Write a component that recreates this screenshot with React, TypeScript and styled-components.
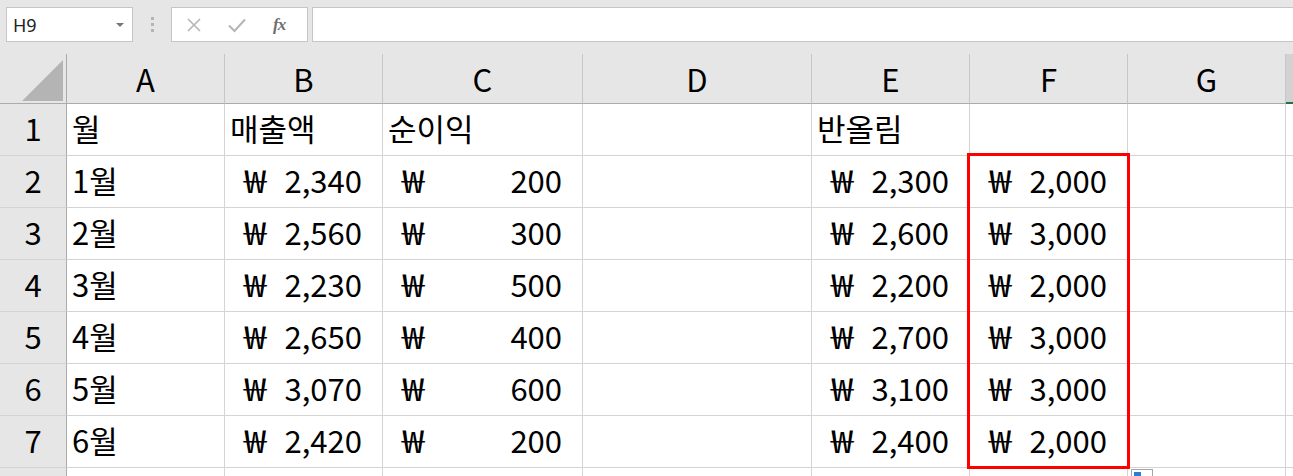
import React from "react";
import styled, { createGlobalStyle } from "styled-components";

const Global = createGlobalStyle`
  html, body { margin: 0; padding: 0; background: #ffffff; overflow: hidden; }
  #root { width: 1293px; height: 476px; overflow: hidden; }
`;

const Page = styled.div`
  width: 1293px;
  height: 476px;
  overflow: hidden;
  background: #e6e6e6;
  display: flex;
  flex-direction: column;
`;

const Toolbar = styled.div`
  height: 54px;
  flex: none;
  display: flex;
  align-items: flex-start;
  padding: 7px 0 0 6px;
  box-sizing: border-box;
`;

const NameBox = styled.div`
  width: 127px;
  height: 35px;
  box-sizing: border-box;
  background: #fff;
  border: 1px solid #c6c6c6;
  display: flex;
  align-items: center;
  justify-content: space-between;
  padding: 0 8px 0 6px;
  font-family: "Noto Sans", "DejaVu Sans", sans-serif;
  font-size: 18px;
  color: #222;
`;

const Caret = styled.span`
  width: 0;
  height: 0;
  border-left: 4px solid transparent;
  border-right: 4px solid transparent;
  border-top: 4px solid #777;
  margin-top: 1px;
`;

const Dots = styled.div`
  width: 38px;
  height: 35px;
  display: flex;
  flex-direction: column;
  align-items: center;
  justify-content: center;
  gap: 3px;
  span {
    width: 3px;
    height: 3px;
    background: #b4b4b4;
  }
`;

const FxBox = styled.div`
  width: 137px;
  height: 35px;
  box-sizing: border-box;
  background: #fff;
  border: 1px solid #c6c6c6;
  display: flex;
  align-items: center;
  padding-left: 13px;
  gap: 24px;
`;

const Fx = styled.span`
  font-family: "Liberation Serif", "DejaVu Serif", serif;
  font-style: italic;
  font-weight: bold;
  font-size: 17px;
  color: #6f6f6f;
  margin-left: 2px;
  letter-spacing: -1px;
`;

const FormulaInput = styled.div`
  flex: 1;
  height: 35px;
  margin-left: 4px;
  box-sizing: border-box;
  background: #fff;
  border: 1px solid #c6c6c6;
  border-right: none;
`;

const SheetWrap = styled.div`
  position: relative;
  flex: 1;
  overflow: hidden;
`;

const Grid = styled.div`
  display: grid;
  grid-template-columns: 67px 158px 158px 200px 229px 158px 158px 158px 1fr;
  grid-template-rows: 50px repeat(8, 52px);
  font-family: "Noto Sans CJK KR", "Noto Sans", sans-serif;
  font-size: 31px;
  color: #000;
`;

const Corner = styled.div`
  background: #e6e6e6;
  border-right: 1px solid #ababab;
  border-bottom: 1px solid #ababab;
  display: flex;
  align-items: flex-end;
  justify-content: flex-end;
  padding: 0 3px 2px 0;
  box-sizing: border-box;
`;

const ColHead = styled.div<{ $sel?: boolean }>`
  background: ${(p) => (p.$sel ? "#d2d2d2" : "#e6e6e6")};
  box-sizing: border-box;
  border-bottom: ${(p) => (p.$sel ? "2px solid #217346" : "1px solid #ababab")};
  border-right: 1px solid #c6c6c6;
  display: flex;
  align-items: center;
  justify-content: center;
`;

const RowHead = styled.div`
  background: #e6e6e6;
  box-sizing: border-box;
  border-right: 1px solid #ababab;
  border-bottom: 1px solid #d4d4d4;
  display: flex;
  align-items: flex-end;
  justify-content: center;
  padding-bottom: 5px;
`;

const Cell = styled.div<{ $acct?: boolean }>`
  background: #fff;
  box-sizing: border-box;
  border-right: 1px solid #d4d4d4;
  border-bottom: 1px solid #d4d4d4;
  display: flex;
  align-items: flex-end;
  justify-content: space-between;
  padding: ${(p) => (p.$acct ? "0 20px 5px 19px" : "0 4px 5px 5px")};
  white-space: nowrap;
`;

const Won = styled.span`
  display: inline-block;
  transform: scaleX(1.3);
  transform-origin: left center;
`;

const Highlight = styled.div`
  position: absolute;
  left: 967px;
  top: 99px;
  width: 163px;
  height: 316px;
  box-sizing: border-box;
  border: 3px solid #ff0000;
  pointer-events: none;
`;

const QuickAnalysis = styled.div`
  position: absolute;
  left: 1131px;
  top: 415px;
  width: 22px;
  height: 20px;
  box-sizing: border-box;
  background: #fff;
  border: 1px solid #a6a6a6;
  padding: 2px 0 0 2px;
  span {
    display: block;
    width: 7px;
    height: 4px;
    background: #2b7bd9;
  }
`;

const cols = ["A", "B", "C", "D", "E", "F", "G", "H"];

type Row = {
  a: string;
  b?: string;
  c?: string;
  e?: string;
  f?: string;
  head?: boolean;
};

const rows: Row[] = [
  { a: "월", b: "매출액", c: "순이익", e: "반올림", head: true },
  { a: "1월", b: "2,340", c: "200", e: "2,300", f: "2,000" },
  { a: "2월", b: "2,560", c: "300", e: "2,600", f: "3,000" },
  { a: "3월", b: "2,230", c: "500", e: "2,200", f: "2,000" },
  { a: "4월", b: "2,650", c: "400", e: "2,700", f: "3,000" },
  { a: "5월", b: "3,070", c: "600", e: "3,100", f: "3,000" },
  { a: "6월", b: "2,420", c: "200", e: "2,400", f: "2,000" },
];

const Acct: React.FC<{ v?: string; head?: boolean }> = ({ v, head }) =>
  head || v === undefined ? (
    <Cell>{v}</Cell>
  ) : (
    <Cell $acct>
      <Won>₩</Won>
      <span>{v}</span>
    </Cell>
  );

export default function App() {
  return (
    <Page>
      <Global />
      <Toolbar>
        <NameBox>
          <span>H9</span>
          <Caret />
        </NameBox>
        <Dots>
          <span />
          <span />
          <span />
        </Dots>
        <FxBox>
          <svg width="18" height="18" viewBox="0 0 18 18">
            <path d="M3 3 L15 15 M15 3 L3 15" stroke="#b5b5b5" strokeWidth="1.6" fill="none" />
          </svg>
          <svg width="20" height="18" viewBox="0 0 20 18">
            <path d="M2 9.5 L7.5 15 L18 3.5" stroke="#b5b5b5" strokeWidth="2" fill="none" />
          </svg>
          <Fx>fx</Fx>
        </FxBox>
        <FormulaInput />
      </Toolbar>
      <SheetWrap>
        <Grid>
          <Corner>
            <svg width="41" height="41" viewBox="0 0 41 41">
              <polygon points="41,0 41,41 0,41" fill="#b4b4b4" />
            </svg>
          </Corner>
          {cols.map((c) => (
            <ColHead key={c} $sel={c === "H"}>
              {c === "H" ? "" : c}
            </ColHead>
          ))}
          {rows.map((r, i) => (
            <React.Fragment key={i}>
              <RowHead>{i + 1}</RowHead>
              <Cell>{r.a}</Cell>
              <Acct v={r.b} head={r.head} />
              <Acct v={r.c} head={r.head} />
              <Cell />
              <Acct v={r.e} head={r.head} />
              <Acct v={r.f} head={r.head} />
              <Cell />
              <Cell />
            </React.Fragment>
          ))}
          <RowHead />
          {cols.map((c) => (
            <Cell key={"r8" + c} />
          ))}
        </Grid>
        <Highlight />
        <QuickAnalysis>
          <span />
        </QuickAnalysis>
      </SheetWrap>
    </Page>
  );
}
